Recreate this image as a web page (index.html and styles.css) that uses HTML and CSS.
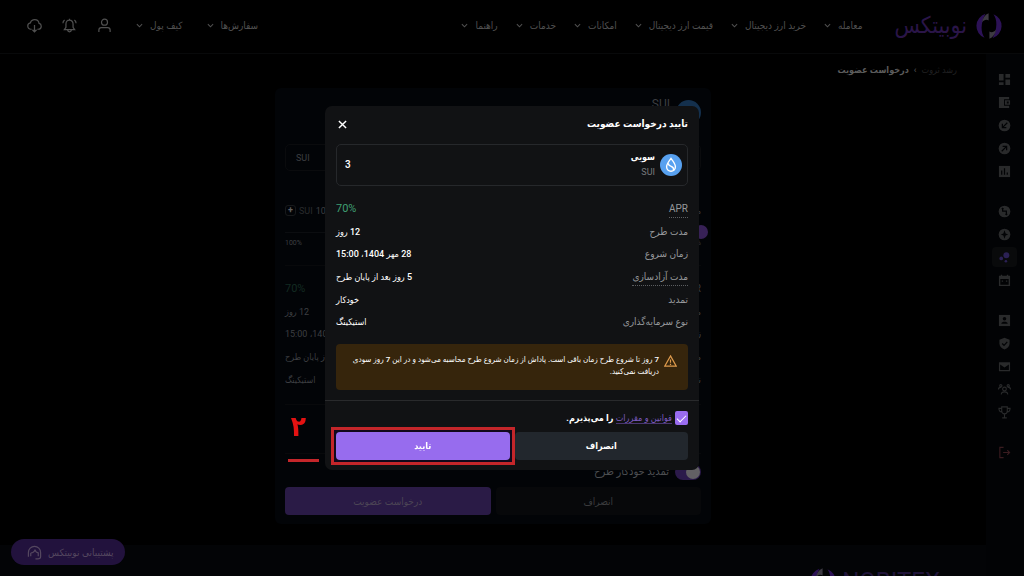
FILE: index.html
```html
<!DOCTYPE html>
<html lang="fa" dir="rtl">
<head>
  <meta charset="UTF-8">
  <meta name="viewport" content="width=device-width, initial-scale=1.0">
  <title>نوبیتکس | درخواست عضویت</title>
  <link rel="stylesheet" href="styles.css">
</head>
<body>
  <svg class="sprite" aria-hidden="true">
    <symbol id="chevron" viewBox="0 0 8 8"><path d="M1 2.5 4 5.5 7 2.5" fill="none" stroke="currentColor" stroke-width="1.2"/></symbol>
    <symbol id="brand" viewBox="0 0 28 28">
      <path d="M10.5 1.8A12.7 12.7 0 0 0 9.5 25.8C5.8 20.5 5.2 11.5 10.5 1.8Z" fill="#2c1256"/>
      <path d="M17.5 26.2A12.7 12.7 0 0 0 18.5 2.2C22.2 7.5 22.8 16.5 17.5 26.2Z" fill="#2c1256"/>
      <path d="M6.8 10.5C8 5.5 10.2 2.5 13.6 1.2V8.5C11.8 7.2 9 7.5 6.8 10.5Z" fill="#3d3a42"/>
      <path d="M21.2 17.5C20 22.5 17.8 25.5 14.4 26.8V19.5C16.2 20.8 19 20.5 21.2 17.5Z" fill="#3d3a42"/>
    </symbol>
  </svg>

  <header class="topbar">
    <a href="#" class="logo">
      <svg class="logo-mark"><use href="#brand"/></svg>
      <span class="logo-text">نوبیتکس</span>
    </a>
    <nav class="nav-links">
      <a href="#">معامله <svg class="chev"><use href="#chevron"/></svg></a>
      <a href="#">خرید ارز دیجیتال <svg class="chev"><use href="#chevron"/></svg></a>
      <a href="#">قیمت ارز دیجیتال <svg class="chev"><use href="#chevron"/></svg></a>
      <a href="#">امکانات <svg class="chev"><use href="#chevron"/></svg></a>
      <a href="#">خدمات <svg class="chev"><use href="#chevron"/></svg></a>
      <a href="#">راهنما <svg class="chev"><use href="#chevron"/></svg></a>
    </nav>
    <nav class="nav-links nav-user">
      <a href="#">سفارش‌ها <svg class="chev"><use href="#chevron"/></svg></a>
      <a href="#">کیف پول <svg class="chev"><use href="#chevron"/></svg></a>
      <button type="button" class="icon-btn" aria-label="حساب کاربری">
        <svg viewBox="0 0 16 16"><circle cx="8" cy="4.5" r="3.2"/><path d="M2 15v-2.200c0-1.600 1-2.600 2.600-2.600h6.800c1.600 0 2.600 1 2.600 2.600V15"/></svg>
      </button>
      <button type="button" class="icon-btn" aria-label="اعلان‌ها">
        <svg viewBox="0 0 16 16"><path d="M2.500 12.500h11L11.800 10V6.500C11.800 4 10.300 2.300 8 2.300S4.200 4 4.200 6.500V10ZM8 2.300V.8M6 13c.3 2.300 3.700 2.300 4 0M2.800 2.200C1.600 3 1 4.200 1 5.600M13.200 2.200C14.400 3 15 4.200 15 5.600"/></svg>
      </button>
      <button type="button" class="icon-btn" aria-label="دانلود برنامه">
        <svg viewBox="0 0 16 16"><path d="M5 12H4.200C2.200 12 .8 10.500.8 8.600c0-1.700 1.200-3 2.800-3.300C4.200 3.200 6 1.800 8.200 1.800c2.500 0 4.300 1.700 4.700 4 1.400.3 2.300 1.400 2.300 2.900 0 1.900-1.300 3.300-3.200 3.300h-1M8 7.500V14.500M5.800 12.500 8 14.700l2.200-2.200"/></svg>
      </button>
    </nav>
  </header>

  <div class="layout">
    <aside class="sidebar">
      <div class="side-group">
        <a href="#" aria-label="داشبورد"><svg viewBox="0 0 14 14"><path d="M1 1h5v7H1zM8 1h5v4H8zM8 7h5v6H8zM1 10h5v3H1z"/></svg></a>
        <a href="#" aria-label="کیف پول"><svg viewBox="0 0 14 14"><path d="M1 1h11v2.500H6.500v7H12V13H1zM7.500 4.500H13v5H7.500zm2 1.500v2h2V6z" fill-rule="evenodd"/></svg></a>
        <a href="#" aria-label="واریز"><svg viewBox="0 0 14 14"><circle cx="7" cy="7" r="6.300"/><path class="cut" d="M10 4 5 9M4.700 5v4.300H9"/></svg></a>
        <a href="#" aria-label="برداشت"><svg viewBox="0 0 14 14"><circle cx="7" cy="7" r="6.300"/><path class="cut" d="M4 10 9 5M5 4.700h4.300V9"/></svg></a>
        <a href="#" aria-label="بازار"><svg viewBox="0 0 14 14"><path d="M1 1h12v12H1z"/><path class="cut" d="M4 10.500V6M7 10.500V3.500M10 10.500V8"/></svg></a>
      </div>
      <div class="side-group">
        <a href="#" aria-label="تبدیل"><svg viewBox="0 0 14 14"><circle cx="7" cy="7" r="6.300"/><path class="cut" d="M5 3.500v3h4v4M4 4.500l1-1 1 1M8 9.500l1 1 1-1"/></svg></a>
        <a href="#" aria-label="معامله"><svg viewBox="0 0 14 14"><circle cx="7" cy="7" r="6.300"/><path class="hole" d="M7 2.500 8.200 5.800 11 7 8.200 8.200 7 11.500 5.800 8.200 3 7 5.800 5.800Z"/></svg></a>
        <a href="#" class="active" aria-label="رشد ثروت"><svg viewBox="0 0 14 14"><circle cx="9" cy="4.500" r="3.200"/><circle cx="3.500" cy="8" r="2"/><circle cx="8.500" cy="11" r="1.400"/></svg></a>
        <a href="#" aria-label="تقویم"><svg viewBox="0 0 14 14"><path d="M1 2h2V.7h1.500V2h5V.7H11V2h2v11H1zm1.500 3.500v6h9v-6z" fill-rule="evenodd"/><path d="M4 7h1.500v1.300H4zM8.500 7H10v1.300H8.500z"/></svg></a>
      </div>
      <div class="side-group">
        <a href="#" aria-label="پروفایل"><svg viewBox="0 0 14 14"><path d="M1 1h12v12H1z"/><circle class="hole" cx="7" cy="5" r="1.900"/><path class="hole" d="M3.500 10.500c.5-2.700 6.500-2.700 7 0z"/></svg></a>
        <a href="#" aria-label="امنیت"><svg viewBox="0 0 14 14"><path d="M7 .7 12.500 3v4c0 3.200-2.500 5.400-5.500 6.500C4 12.400 1.500 10.200 1.500 7V3z"/><path class="cut" d="M4.500 7l2 2 3.500-3.800"/></svg></a>
        <a href="#" aria-label="پیام‌ها"><svg viewBox="0 0 14 14"><path d="M1 2.500h12v9.500H1zm1.300 2.300v5.900h9.400V4.800L7 8z" fill-rule="evenodd"/></svg></a>
        <a href="#" aria-label="دعوت دوستان"><svg viewBox="0 0 14 14" class="line"><circle cx="7" cy="6.500" r="2"/><path d="M3.500 12.500c0-4 7-4 7 0M.5 7c0-1.800 1-2.500 3-2.500M13.500 7c0-1.800-1-2.500-3-2.500"/><circle cx="3" cy="3" r="1.200"/><circle cx="11" cy="3" r="1.200"/></svg></a>
        <a href="#" aria-label="جوایز"><svg viewBox="0 0 14 14" class="line"><path d="M4 1h6v4.500c0 4-6 4-6 0zM4 2.500H1C1 5 2 6.500 4.300 6.500M10 2.500h3C13 5 12 6.500 9.700 6.500M7 8.500v3.500M4.500 12.800h5"/></svg></a>
      </div>
      <div class="side-group">
        <a href="#" class="logout" aria-label="خروج"><svg viewBox="0 0 14 14" class="line"><path d="M6 1.500H2v11h4M5.500 7H12.500M10 4.500 12.500 7 10 9.500"/></svg></a>
      </div>
    </aside>

    <main class="content">
      <div class="breadcrumb">
        <a href="#">رشد ثروت</a>
        <span class="sep">›</span>
        <strong>درخواست عضویت</strong>
      </div>

      <section class="card">
        <div class="card-head">
          <span class="coin coin-dim"></span>
          <span class="card-coin">SUI</span>
        </div>
        <div class="amount-box"><span>SUI</span></div>
        <div class="balance">
          <span>موجودی</span>
          <span class="balance-value"><b dir="ltr">100</b> SUI <i class="plus">+</i></span>
        </div>
        <input type="range" class="slider" min="0" max="100" value="0" aria-label="درصد">
        <div class="marks"><span>0%</span><span>100%</span></div>
        <dl class="details dim">
          <div class="tall"><dt>APR</dt><dd class="green">70%</dd></div>
          <div><dt>مدت طرح</dt><dd>12 روز</dd></div>
          <div><dt>زمان شروع</dt><dd>28 مهر 1404، 15:00</dd></div>
          <div class="tall"><dt>مدت آزادسازی</dt><dd>5 روز بعد از پایان طرح</dd></div>
          <div><dt>نوع</dt><dd>استیکینگ</dd></div>
        </dl>
        <div class="card-gap"></div>
        <label class="renew">
          <input type="checkbox" class="switch" checked>
          تمدید خودکار طرح
        </label>
        <div class="btn-row">
          <button type="button" class="btn btn-off">انصراف</button>
          <button type="button" class="btn btn-off btn-off-main">درخواست عضویت</button>
        </div>
      </section>

      <footer class="footer" dir="ltr">
        <svg class="logo-mark"><use href="#brand"/></svg>
        <span class="footer-name">NOBITEX</span>
      </footer>
    </main>
  </div>

  <button type="button" class="support">
    پشتیبانی نوبیتکس
    <svg viewBox="0 0 16 16"><path d="M1.500 12.500V8a6.500 6.500 0 0 1 13 0v4.500c0 1.700-1.200 2.300-3 2.300H9M4 12V8.500M4 8.500c2.500 0 4-1.500 4.500-3.500.5 2 1.500 3.200 3.500 3.500V12"/></svg>
  </button>

  <div class="overlay">
    <div class="modal" role="dialog" aria-labelledby="modalTitle">
      <div class="modal-head">
        <h2 id="modalTitle">تایید درخواست عضویت</h2>
        <button type="button" class="close" aria-label="بستن">
          <svg viewBox="0 0 10 10"><path d="M1 1 9 9M9 1 1 9"/></svg>
        </button>
      </div>

      <div class="coin-box">
        <span class="coin">
          <svg viewBox="0 0 22 22"><path d="M11 4.500C8.500 7.700 6.600 10 6.600 12.800a4.400 4.400 0 0 0 8.800 0C15.400 10 13.500 7.700 11 4.500Z"/><path d="M8.300 9.300c0 2 1 2.400 2.900 3.100 2 .8 2.700 2 2.300 3.800"/></svg>
        </span>
        <div class="coin-name">
          <strong>سویی</strong>
          <span>SUI</span>
        </div>
        <span class="coin-amount">3</span>
      </div>

      <dl class="details">
        <div class="tall"><dt><span class="dotted">APR</span></dt><dd class="green">70%</dd></div>
        <div><dt>مدت طرح</dt><dd>12 روز</dd></div>
        <div><dt>زمان شروع</dt><dd>28 مهر 1404، 15:00</dd></div>
        <div class="tall"><dt><span class="dotted">مدت آزادسازی</span></dt><dd>5 روز بعد از پایان طرح</dd></div>
        <div><dt>تمدید</dt><dd>خودکار</dd></div>
        <div><dt>نوع سرمایه‌گذاری</dt><dd>استیکینگ</dd></div>
      </dl>

      <div class="alert">
        <svg viewBox="0 0 14 14"><path d="M7 1.500 13.200 12.500H.8ZM7 5.500V9M7 10v1.200"/></svg>
        <p>7 روز تا شروع طرح زمان باقی است. پاداش از زمان شروع طرح محاسبه می‌شود و در این 7 روز سودی دریافت نمی‌کنید.</p>
      </div>

      <div class="modal-foot">
        <div class="terms">
          <input type="checkbox" id="terms" checked>
          <label for="terms"><a href="#">قوانین و مقررات</a> را می‌پذیرم.</label>
        </div>
        <div class="btn-row">
          <button type="button" class="btn btn-cancel">انصراف</button>
          <div class="marked">
            <button type="button" class="btn btn-confirm">تایید</button>
          </div>
        </div>
      </div>

      <div class="step">۲</div>
    </div>
  </div>
</body>
</html>
```
FILE: styles.css
```css
* {
  box-sizing: border-box;
  margin: 0;
  padding: 0;
}

body {
  font-family: Roboto, 'DejaVu Sans Condensed', 'DejaVu Sans', sans-serif;
  font-size: 9px;
  line-height: 12px;
  background-color: #000;
  color: #fff;
  height: 100vh;
  overflow: hidden;
  display: flex;
  flex-direction: column;
}

a {
  color: inherit;
  text-decoration: none;
}

button {
  font-family: inherit;
  font-size: 9px;
  border: none;
  background: none;
  color: inherit;
  cursor: pointer;
}

.sprite {
  display: none;
}

/* top bar */

.topbar {
  flex: none;
  display: flex;
  align-items: center;
  height: 54px;
  padding: 0 21px 2px 27px;
  border-bottom: 1px solid #08090a;
  color: #505050;
}

.logo {
  display: flex;
  align-items: center;
  gap: 8px;
  margin-left: 32px;
}

.logo-mark {
  width: 28px;
  height: 28px;
}

.logo-text {
  font-size: 23px;
  line-height: 28px;
  color: #2a1548;
}

.nav-links {
  display: flex;
  align-items: center;
  gap: 18px;
  font-size: 10px;
}

.nav-links a {
  display: flex;
  align-items: center;
  gap: 7px;
  white-space: nowrap;
}

.chev {
  width: 7px;
  height: 7px;
}

.nav-user {
  margin-right: auto;
  gap: 20px;
}

.nav-user a {
  margin-left: 4px;
}

.icon-btn {
  width: 15px;
  height: 15px;
}

.icon-btn svg,
.support svg {
  display: block;
  width: 15px;
  height: 15px;
  fill: none;
  stroke: currentColor;
  stroke-width: 1.3;
}

/* page */

.layout {
  flex: 1;
  display: flex;
  min-height: 0;
}

.sidebar {
  width: 38px;
  padding: 15px 1px 0 0;
  background: #020305;
  color: #292a2b;
}

.side-group {
  display: flex;
  flex-direction: column;
  align-items: center;
  gap: 3px;
  margin-bottom: 20px;
}

.side-group a {
  display: flex;
  align-items: center;
  justify-content: center;
  width: 25px;
  height: 20px;
  border-radius: 4px;
}

.side-group svg {
  width: 13px;
  height: 13px;
  fill: currentColor;
}

.side-group .line {
  fill: none;
  stroke: currentColor;
  stroke-width: 1.2;
}

.side-group .cut {
  fill: none;
  stroke: #020305;
  stroke-width: 1.3;
}

.hole {
  fill: #020305;
}

.side-group .active {
  background: #090a0b;
  color: #2b2154;
}

.side-group .logout {
  color: #3a1c20;
}

.content {
  flex: 1;
  overflow: hidden;
}

.breadcrumb {
  display: flex;
  gap: 5px;
  padding: 10px 29px 0;
  height: 34px;
  color: #202122;
}

.breadcrumb strong,
.breadcrumb .sep {
  color: #5c5c5c;
}

.card {
  max-width: 436px;
  margin: 0 auto;
  padding: 8px 10px 9px;
  border-radius: 6px;
  background: #020407;
  color: #3d3f42;
}

.card-head {
  display: flex;
  align-items: center;
  gap: 6px;
  height: 32px;
}

.card-coin {
  align-self: flex-start;
  font-size: 12px;
  line-height: 16px;
}

.coin {
  flex: none;
  width: 22px;
  height: 22px;
  border-radius: 50%;
  background: #58a1f0;
}

.coin svg {
  display: block;
  fill: none;
  stroke: #fff;
  stroke-width: 1.4;
}

.coin-dim {
  width: 25px;
  height: 25px;
  background: #14304d;
}

.amount-box {
  display: flex;
  align-items: center;
  justify-content: flex-end;
  height: 27px;
  margin-top: 16px;
  padding: 0 10px;
  border: 1px solid #0a0b0d;
  border-radius: 5px;
}

.balance {
  display: flex;
  justify-content: space-between;
  align-items: center;
  height: 13px;
  margin-top: 33px;
}

.balance-value {
  display: flex;
  align-items: center;
  gap: 3px;
  color: #292b2d;
}

.balance-value b {
  font-weight: 400;
  color: #3d3f42;
}

.plus {
  width: 11px;
  height: 11px;
  border: 1px solid #17191b;
  border-radius: 3px;
  font-style: normal;
  font-weight: 700;
  line-height: 9px;
  text-align: center;
  color: #606060;
}

.slider {
  appearance: none;
  display: block;
  width: calc(100% + 7px);
  height: 14px;
  margin: 8px -7px 0 0;
  background: linear-gradient(#0b0d10, #0b0d10) center / 100% 1px no-repeat;
}

.slider::-webkit-slider-thumb {
  appearance: none;
  width: 14px;
  height: 14px;
  border-radius: 50%;
  background: #372156;
}

.marks {
  display: flex;
  justify-content: space-between;
  height: 27px;
  font-size: 7px;
  line-height: 8px;
  border-bottom: 1px solid #08090b;
}

.details > div {
  display: flex;
  justify-content: space-between;
  align-items: center;
  height: 22px;
}

.details > .tall {
  height: 24px;
}

.details dt {
  font-size: 10px;
  color: #96989b;
}

.details dd {
  font-weight: 500;
}

.details .green {
  font-size: 11px;
  font-weight: 400;
  color: #3f9f73;
}

.details.dim {
  margin-top: 11px;
}

.dim dt,
.dim dd {
  font-weight: 400;
  color: #3d3f42;
}

.details.dim .green {
  color: #132b22;
}

.dotted {
  display: block;
  margin-top: 3px;
  padding-bottom: 2px;
  border-bottom: 1px dotted #5c5e61;
}

.card-gap {
  height: 50px;
  margin-top: 13px;
  border-top: 1px solid #08090b;
  border-bottom: 1px solid #08090b;
}

.renew {
  display: flex;
  align-items: center;
  gap: 6px;
  height: 16px;
  margin: 10px 0 7px;
  font-size: 11px;
  color: #4c4e51;
}

.switch {
  appearance: none;
  display: flex;
  width: 26px;
  height: 16px;
  border-radius: 8px;
  background: #2b1a4b;
}

.switch::after {
  content: '';
  width: 14px;
  height: 14px;
  margin: 1px;
  border-radius: 50%;
  background: #626064;
}

.btn-row {
  display: flex;
  gap: 5px;
}

.btn {
  flex: 1;
  height: 28px;
  border-radius: 4px;
}

.btn-off {
  font-size: 10px;
  background: #07080a;
  color: #3a3b3d;
}

.btn-off-main {
  background: #2a1b46;
  color: #4c4555;
}

.footer {
  display: flex;
  align-items: flex-start;
  justify-content: flex-end;
  gap: 5px;
  margin-top: 21px;
  padding: 22px 46px;
  background: #030406;
}

.footer-name {
  font-size: 24px;
  line-height: 28px;
  color: #1f1338;
}

.support {
  position: fixed;
  left: 11px;
  bottom: 11px;
  display: flex;
  align-items: center;
  gap: 6px;
  height: 26px;
  padding: 0 12px 0 16px;
  border-radius: 13px;
  font-size: 10px;
  background: #22123d;
  color: #54475f;
}

/* confirm dialog */

.overlay {
  position: fixed;
  inset: 0;
  display: flex;
  align-items: center;
  justify-content: center;
}

.modal {
  position: relative;
  width: 374px;
  border-radius: 7px;
  background: #111214;
}

.modal-head {
  display: flex;
  justify-content: space-between;
  align-items: center;
  height: 38px;
  padding: 0 11px 2px 13px;
}

.modal-head h2 {
  font-size: 10px;
  line-height: 16px;
}

.close {
  width: 9px;
  height: 9px;
}

.close svg {
  display: block;
  fill: none;
  stroke: #fff;
  stroke-width: 1.6;
}

.coin-box {
  display: flex;
  align-items: center;
  gap: 5px;
  height: 42px;
  margin: 0 11px;
  padding: 0 5px 0 8px;
  border: 1px solid #26282b;
  border-radius: 5px;
}

.coin-name {
  display: flex;
  flex-direction: column;
  line-height: 15px;
}

.coin-name span {
  color: #77797c;
}

.coin-amount {
  margin-right: auto;
  font-size: 10px;
  font-weight: 500;
}

.modal .details {
  margin: 11px;
}

.alert {
  display: flex;
  gap: 5px;
  margin: 0 11px;
  min-height: 46px;
  padding: 10px 11px;
  border-radius: 4px;
  background: #36250c;
  font-size: 8px;
  font-weight: 500;
  line-height: 12px;
}

.alert svg {
  flex: none;
  width: 13px;
  height: 14px;
  fill: none;
  stroke: #dd9a4c;
  stroke-width: 1.3;
}

.modal-foot {
  margin-top: 10px;
  padding: 10px 11px;
  border-top: 1px solid #292a2c;
}

.terms {
  display: flex;
  align-items: center;
  gap: 3px;
  margin-bottom: 7px;
  font-weight: 700;
}

.terms input {
  appearance: none;
  width: 13px;
  height: 14px;
  border-radius: 2px;
  background: #9a6cf0;
}

.terms input::after {
  content: '';
  display: block;
  width: 8px;
  height: 4px;
  margin: 4px auto 0;
  border: solid #fff;
  border-width: 0 0 1px 1px;
  transform: rotate(-45deg);
}

.terms a {
  border-bottom: 1px solid #4a3670;
  font-weight: 500;
  color: #7d5bc0;
}

.btn-cancel {
  background: #22272d;
  font-weight: 700;
}

.marked {
  position: relative;
  flex: 1;
  display: flex;
}

.marked::before {
  content: '';
  position: absolute;
  inset: -5px;
  border: 3px solid #c4262a;
  background: #12091c;
}

.btn-confirm {
  position: relative;
  background: #976cee;
  font-weight: 700;
}

/* step number beside the confirm button */

.step {
  position: absolute;
  right: 100%;
  bottom: 8px;
  width: 31px;
  height: 57px;
  margin-right: 6px;
  padding-right: 10px;
  border-bottom: 3px solid #c4262a;
  font-size: 28px;
  font-weight: 700;
  line-height: 44px;
  text-align: center;
  color: #e31212;
}
```
